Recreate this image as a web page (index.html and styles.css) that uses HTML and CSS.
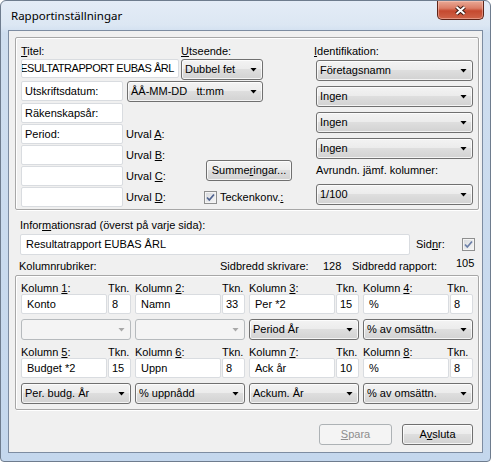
FILE: index.html
```html
<!DOCTYPE html>
<html lang="sv">
<head>
<meta charset="utf-8">
<title>Rapportinställningar</title>
<link rel="stylesheet" href="styles.css">
</head>
<body>
<div class="window">
  <div class="titlebar">
    <span class="title">Rapportinställningar</span>
    <div class="close">
      <svg width="13" height="11" viewBox="0 0 13 11"><path d="M2.5 2 L10.5 9 M10.5 2 L2.5 9" stroke="#3b1a14" stroke-width="4" fill="none"/><path d="M2.5 2 L10.5 9 M10.5 2 L2.5 9" stroke="#ffffff" stroke-width="2" fill="none"/></svg>
    </div>
  </div>
  <div class="client">
    <div class="group g1">
      <div class="left">
        <div class="lblrow"><span><u>T</u>itel:</span><span><u>U</u>tseende:</span></div>
        <div class="row r1">
          <div class="edit titel"><span>RESULTATRAPPORT EUBAS ÅRL</span></div>
          <div class="combo fet">Dubbel fet</div>
        </div>
        <div class="row r2">
          <div class="box">Utskriftsdatum:</div>
          <div class="combo datum">ÅÅ-MM-DD&nbsp;&nbsp;&nbsp;tt:mm</div>
        </div>
        <div class="box solo">Räkenskapsår:</div>
        <div class="urval">
          <div class="box">Period:</div><span class="ulbl">Urval <u>A</u>:</span>
          <div class="box"></div><span class="ulbl">Urval <u>B</u>:</span>
          <div class="box"></div><span class="ulbl">Urval <u>C</u>:</span>
          <div class="box"></div><span class="ulbl">Urval <u>D</u>:</span>
          <div class="btn summ">Summe<u>r</u>ingar...</div>
          <div class="chkline"><span class="chk"><svg width="11" height="11" viewBox="0 0 11 11"><path d="M2 5.5 L4.3 8 L9 2.5" fill="none" stroke="#4f6390" stroke-width="1.7"/></svg></span><span>Teckenkonv.<u>:</u></span></div>
        </div>
      </div>
      <div class="right">
        <div class="rlbl"><u>I</u>dentifikation:</div>
        <div class="combo first">Företagsnamn</div>
        <div class="combo">Ingen</div>
        <div class="combo">Ingen</div>
        <div class="combo">Ingen</div>
        <div class="rlbl avr">Avrundn. jämf. kolumner:</div>
        <div class="combo last">1/100</div>
      </div>
    </div>

    <div class="mid">
      <div class="infolbl">Infor<u>m</u>ationsrad (överst på varje sida):</div>
      <div class="inforow">
        <div class="edit info">Resultatrapport EUBAS ÅRL</div>
        <span class="sidnr">Sid<u>n</u>r:</span>
        <span class="chk"><svg width="11" height="11" viewBox="0 0 11 11"><path d="M2 5.5 L4.3 8 L9 2.5" fill="none" stroke="#6b7fa8" stroke-width="1.7"/></svg></span>
      </div>
      <div class="kolrow">
        <span>Kolumnrubriker:</span>
        <span>Sidbredd skrivare:</span>
        <span>128</span>
        <span>Sidbredd rapport:</span>
        <span class="raised">105</span>
      </div>
    </div>

    <div class="group g2">
      <div class="col">
        <div class="clbl"><span>Kolumn <u>1</u>:</span><span>Tkn.</span></div>
        <div class="cin"><div class="edit name">Konto</div><div class="edit tkn">8</div></div>
        <div class="combo dis"></div>
      </div>
      <div class="col">
        <div class="clbl"><span>Kolumn <u>2</u>:</span><span>Tkn.</span></div>
        <div class="cin"><div class="edit name">Namn</div><div class="edit tkn">33</div></div>
        <div class="combo dis"></div>
      </div>
      <div class="col">
        <div class="clbl"><span>Kolumn <u>3</u>:</span><span>Tkn.</span></div>
        <div class="cin"><div class="edit name">Per *2</div><div class="edit tkn">15</div></div>
        <div class="combo">Period År</div>
      </div>
      <div class="col">
        <div class="clbl"><span>Kolumn <u>4</u>:</span><span class="tkn4">Tkn.</span></div>
        <div class="cin"><div class="edit name">%</div><div class="edit tkn">8</div></div>
        <div class="combo">% av omsättn.</div>
      </div>
      <div class="col">
        <div class="clbl"><span>Kolumn <u>5</u>:</span><span>Tkn.</span></div>
        <div class="cin"><div class="edit name">Budget *2</div><div class="edit tkn">15</div></div>
        <div class="combo">Per. budg. År</div>
      </div>
      <div class="col">
        <div class="clbl"><span>Kolumn <u>6</u>:</span><span>Tkn.</span></div>
        <div class="cin"><div class="edit name">Uppn</div><div class="edit tkn">8</div></div>
        <div class="combo">% uppnådd</div>
      </div>
      <div class="col">
        <div class="clbl"><span>Kolumn <u>7</u>:</span><span>Tkn.</span></div>
        <div class="cin"><div class="edit name">Ack år</div><div class="edit tkn">10</div></div>
        <div class="combo">Ackum. År</div>
      </div>
      <div class="col">
        <div class="clbl"><span>Kolumn <u>8</u>:</span><span class="tkn4">Tkn.</span></div>
        <div class="cin"><div class="edit name">%</div><div class="edit tkn">8</div></div>
        <div class="combo">% av omsättn.</div>
      </div>
    </div>

    <div class="buttons">
      <div class="btn disabled spara"><u>S</u>para</div>
      <div class="btn avsluta">A<u>v</u>sluta</div>
    </div>
  </div>
</div>
</body>
</html>
```

FILE: styles.css
```css
* { box-sizing: border-box; }
html, body { margin: 0; padding: 0; background: #ffffff; }
body {
  font-family: "Liberation Sans", Arial, sans-serif;
  font-size: 11px;
  line-height: 13px;
  color: #000;
}
u { text-decoration: underline; text-underline-offset: 1px; }

.window {
  width: 491px;
  height: 462px;
  border: 1px solid #6e7c8e;
  border-radius: 6px 6px 4px 4px;
  background: linear-gradient(180deg, #e4ecf7 0px, #dce7f3 24px, #cfdeef 32px, #c4d7ed 100%);
  display: flex;
  flex-direction: column;
  overflow: hidden;
}

.titlebar {
  height: 29px;
  flex: none;
  display: flex;
  align-items: flex-start;
}
.title {
  font-family: "Noto Sans", "Liberation Sans", sans-serif;
  font-size: 11.5px;
  line-height: 16px;
  padding: 7px 0 0 10px;
  color: #000;
}
.close {
  margin-left: auto;
  margin-right: 6px;
  width: 47px;
  height: 19px;
  border: 1px solid #5e2418;
  border-top: none;
  border-radius: 0 0 5px 5px;
  background: linear-gradient(180deg, #e9a996 0%, #db7d66 40%, #c5492f 55%, #cf6449 100%);
  box-shadow: inset 0 0 0 1px rgba(255, 210, 200, 0.45);
  display: flex;
  align-items: center;
  justify-content: center;
}

.client {
  margin-left: 7px;
  width: 475px;
  height: 423px;
  flex: none;
  background: #f0f0f0;
  border: 1px solid #7d8ca1;
  padding: 6px 3px 0 6px;
}

.group {
  width: 464px;
  border: 1px solid #a7a7a7;
  border-radius: 2px;
  box-shadow: inset 1px 1px 0 #ffffff, 1px 1px 0 #ffffff;
}

/* group 1 */
.g1 {
  height: 173px;
  display: flex;
  padding-left: 5px;
}
.left {
  width: 295px;
  display: flex;
  flex-direction: column;
  padding-top: 7px;
}
.lblrow {
  height: 13px;
  display: grid;
  grid-template-columns: 160px auto;
}
.row { display: flex; }
.r1 { margin-top: 1px; height: 21px; }
.r2 { margin-top: 1px; height: 21px; }
.solo { margin-top: 1px; }

.edit, .box {
  height: 20px;
  background: #ffffff;
  border: 1px solid #d9dce0;
  border-radius: 2px;
  display: flex;
  align-items: center;
  white-space: nowrap;
  overflow: hidden;
}
.box { width: 102px; padding-left: 3px; }
.titel {
  width: 158px;
  height: 19px;
  justify-content: flex-end;
  padding-right: 4px;
  letter-spacing: -0.45px;
}
.combo {
  height: 21px;
  border: 1px solid #707070;
  border-radius: 3px;
  background: linear-gradient(180deg, #f3f3f3 0%, #ececec 45%, #dedede 50%, #d2d2d2 100%);
  box-shadow: inset 0 0 0 1px rgba(255, 255, 255, 0.75);
  display: flex;
  align-items: center;
  padding-left: 3px;
  white-space: nowrap;
}
.combo::after {
  content: "";
  width: 7px;
  height: 4px;
  margin-left: auto;
  margin-right: 5px;
  background: #000;
  clip-path: polygon(0 0, 100% 0, 50% 100%);
}
.combo.dis {
  border-color: #b6babd;
  background: #f4f4f4;
  box-shadow: none;
}
.combo.dis::after { background: #a8a8a8; }

.fet { width: 82px; margin-left: 2px; }
.datum { width: 136px; margin-left: 4px; }

.urval {
  margin-top: 1px;
  display: grid;
  grid-template-columns: 102px 81px 1fr;
  grid-template-rows: repeat(4, 20px);
  row-gap: 1px;
}
.urval .box { grid-column: 1; }
.ulbl { grid-column: 2; padding-left: 3px; align-self: center; }
.summ {
  grid-column: 3;
  grid-row: 2 / 4;
  align-self: end;
  margin: 0 0 5px 2px;
  width: 86px;
}
.chkline {
  grid-column: 3;
  grid-row: 4;
  display: flex;
  align-items: center;
  gap: 3px;
}

.btn {
  height: 21px;
  border: 1px solid #707070;
  border-radius: 3px;
  background: linear-gradient(180deg, #f3f3f3 0%, #ececec 45%, #dedede 50%, #d2d2d2 100%);
  box-shadow: inset 0 0 0 1px rgba(255, 255, 255, 0.75);
  display: flex;
  align-items: center;
  justify-content: center;
  white-space: nowrap;
}
.btn.disabled {
  border-color: #adb2b5;
  background: #f4f4f4;
  box-shadow: none;
  color: #8d8d8d;
}

.chk {
  width: 13px;
  height: 13px;
  flex: none;
  border: 1px solid #8e8f8f;
  background: linear-gradient(135deg, #d6d9dd 0%, #f7f7f7 100%);
  box-shadow: inset 0 0 0 1px #f4f4f4;
  display: inline-flex;
}

.right {
  width: 157px;
  display: flex;
  flex-direction: column;
  padding-top: 7px;
}
.rlbl { height: 13px; margin-left: -2px; }
.right .combo { margin-top: 5px; }
.right .combo.first { margin-top: 2px; }
.avr { margin-top: 5px; margin-left: 0; }
.right .combo.last { margin-top: 7px; }

/* middle */
.mid { padding-left: 5px; }
.infolbl { margin-top: 9px; height: 13px; }
.inforow {
  margin-top: 2px;
  height: 21px;
  display: flex;
  align-items: center;
}
.info { width: 390px; height: 21px; padding-left: 5px; }
.sidnr { width: 46px; margin-left: 6px; }
.kolrow {
  margin-top: 2px;
  height: 16px;
  display: grid;
  grid-template-columns: 201px 103px 29px 104px auto;
  align-items: end;
  margin-left: -1px;
}
.raised { align-self: start; }

/* group 2 */
.g2 {
  margin-top: 2px;
  height: 135px;
  padding: 6px 0 0 5px;
  display: grid;
  grid-template-columns: repeat(4, 110px);
  column-gap: 4px;
  row-gap: 6px;
  align-content: start;
}
.col { display: flex; flex-direction: column; }
.clbl {
  height: 12px;
  line-height: 12px;
  display: grid;
  grid-template-columns: 87px auto;
}
.cin { display: flex; gap: 1px; }
.name { width: 86px; padding-left: 5px; }
.tkn { width: 23px; padding-left: 3px; }
.col .combo { margin-top: 5px; }
.tkn4 { margin-left: -3px; }

.buttons {
  width: 464px;
  margin-top: 14px;
  padding-right: 6px;
  display: flex;
  justify-content: flex-end;
  gap: 10px;
}
.spara { width: 73px; }
.avsluta { width: 71px; }
```
